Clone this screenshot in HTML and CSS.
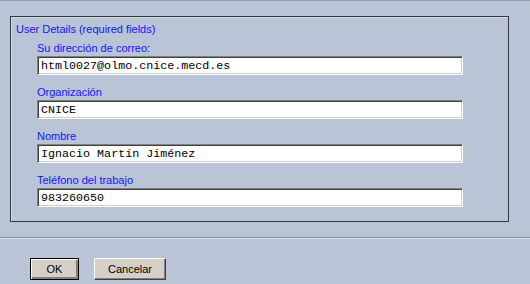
FILE: index.html
```html
<!DOCTYPE html>
<html lang="es">
<head>
  <meta charset="UTF-8" />
  <title>User Details</title>
  <link rel="stylesheet" href="styles.css">
</head>
<body>
  <div class="dialog">
    <div class="details">
      <div class="legend">User Details (required fields)</div>

      <label class="field">
        <span class="label">Su dirección de correo:</span>
        <input type="text" value="html0027@olmo.cnice.mecd.es">
      </label>
      <label class="field">
        <span class="label">Organización</span>
        <input type="text" value="CNICE">
      </label>
      <label class="field">
        <span class="label">Nombre</span>
        <input type="text" value="Ignacio Martín Jiménez">
      </label>
      <label class="field">
        <span class="label">Teléfono del trabajo</span>
        <input type="text" value="983260650">
      </label>
    </div>

    <div class="actions">
      <button class="default">OK</button>
      <button>Cancelar</button>
    </div>
  </div>
</body>
</html>
```

FILE: styles.css
```css
body {
  margin: 0;
  font-family: "Liberation Sans", Arial, sans-serif;
  font-size: 11px;
  background: #b9c4d6;
}
.dialog {
  height: 283px;
  border-top: 1px solid #9a9ea6;
  background: #b9c4d6;
}
.details {
  margin: 15px 0 0 10px;
  width: 497px;
  padding: 5px 0 14px;
  border: 1px solid #35383d;
  box-shadow: inset 1px 1px 0 #d3dae5;
}
.legend {
  padding-left: 5px;
  line-height: 14px;
  color: #1414ff;
}
.field {
  display: block;
  margin: 5px 0 0 26px;
}
.field + .field {
  margin-top: 10px;
}
.label {
  display: block;
  line-height: 14px;
  margin-bottom: 1px;
  color: #1414ff;
}
input {
  display: block;
  box-sizing: border-box;
  width: 426px;
  height: 19px;
  margin: 0;
  padding: 0 3px;
  font-family: "Liberation Mono", "Courier New", monospace;
  font-size: 11.7px;
  color: #000;
  background: #fff;
  border: 1px solid;
  border-color: #808080 #fff #fff #808080;
  box-shadow: inset 1px 1px 0 #404040, inset -1px -1px 0 #d4d0c8;
  outline: none;
}
.actions {
  margin-top: 15px;
  padding: 20px 0 0 30px;
  border-top: 1px solid #8c9096;
  box-shadow: inset 0 1px 0 #dbe1ea;
  display: flex;
  gap: 15px;
}
button {
  box-sizing: border-box;
  width: 72px;
  height: 22px;
  padding: 0;
  font-family: "Liberation Sans", Arial, sans-serif;
  font-size: 11px;
  color: #000;
  background: #d4d0c8;
  border: 1px solid;
  border-color: #fff #404040 #404040 #fff;
  box-shadow: inset -1px -1px 0 #808080;
}
button.default {
  width: 49px;
  border-color: #000;
  box-shadow: inset 1px 1px 0 #fff, inset -2px -2px 0 #808080;
}
```
